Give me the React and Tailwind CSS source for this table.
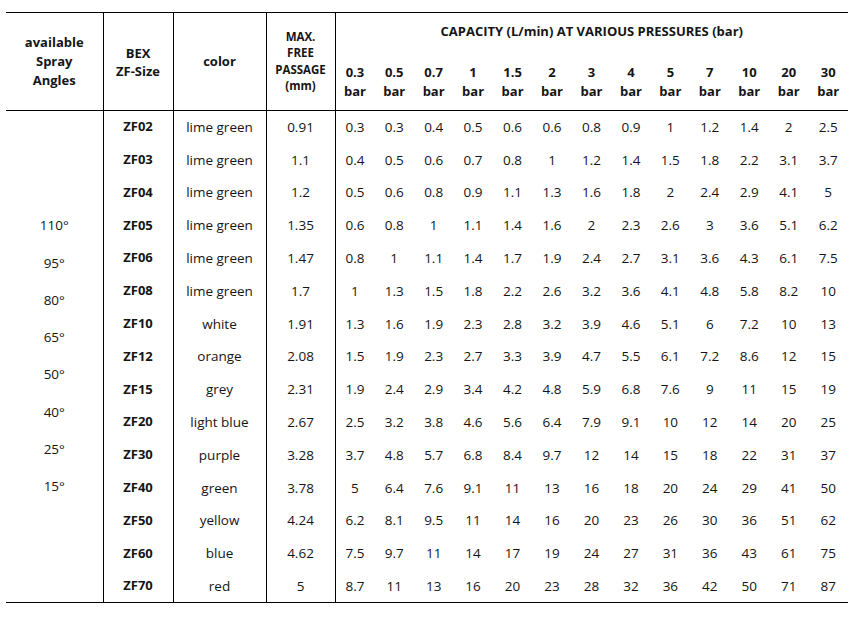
const pressures = ["0.3", "0.5", "0.7", "1", "1.5", "2", "3", "4", "5", "7", "10", "20", "30"]

const angles = ["110°", "95°", "80°", "65°", "50°", "40°", "25°", "15°"]

const rows = [
  ["ZF02", "lime green", "0.91", ["0.3", "0.3", "0.4", "0.5", "0.6", "0.6", "0.8", "0.9", "1", "1.2", "1.4", "2", "2.5"]],
  ["ZF03", "lime green", "1.1", ["0.4", "0.5", "0.6", "0.7", "0.8", "1", "1.2", "1.4", "1.5", "1.8", "2.2", "3.1", "3.7"]],
  ["ZF04", "lime green", "1.2", ["0.5", "0.6", "0.8", "0.9", "1.1", "1.3", "1.6", "1.8", "2", "2.4", "2.9", "4.1", "5"]],
  ["ZF05", "lime green", "1.35", ["0.6", "0.8", "1", "1.1", "1.4", "1.6", "2", "2.3", "2.6", "3", "3.6", "5.1", "6.2"]],
  ["ZF06", "lime green", "1.47", ["0.8", "1", "1.1", "1.4", "1.7", "1.9", "2.4", "2.7", "3.1", "3.6", "4.3", "6.1", "7.5"]],
  ["ZF08", "lime green", "1.7", ["1", "1.3", "1.5", "1.8", "2.2", "2.6", "3.2", "3.6", "4.1", "4.8", "5.8", "8.2", "10"]],
  ["ZF10", "white", "1.91", ["1.3", "1.6", "1.9", "2.3", "2.8", "3.2", "3.9", "4.6", "5.1", "6", "7.2", "10", "13"]],
  ["ZF12", "orange", "2.08", ["1.5", "1.9", "2.3", "2.7", "3.3", "3.9", "4.7", "5.5", "6.1", "7.2", "8.6", "12", "15"]],
  ["ZF15", "grey", "2.31", ["1.9", "2.4", "2.9", "3.4", "4.2", "4.8", "5.9", "6.8", "7.6", "9", "11", "15", "19"]],
  ["ZF20", "light blue", "2.67", ["2.5", "3.2", "3.8", "4.6", "5.6", "6.4", "7.9", "9.1", "10", "12", "14", "20", "25"]],
  ["ZF30", "purple", "3.28", ["3.7", "4.8", "5.7", "6.8", "8.4", "9.7", "12", "14", "15", "18", "22", "31", "37"]],
  ["ZF40", "green", "3.78", ["5", "6.4", "7.6", "9.1", "11", "13", "16", "18", "20", "24", "29", "41", "50"]],
  ["ZF50", "yellow", "4.24", ["6.2", "8.1", "9.5", "11", "14", "16", "20", "23", "26", "30", "36", "51", "62"]],
  ["ZF60", "blue", "4.62", ["7.5", "9.7", "11", "14", "17", "19", "24", "27", "31", "36", "43", "61", "75"]],
  ["ZF70", "red", "5", ["8.7", "11", "13", "16", "20", "23", "28", "32", "36", "42", "50", "71", "87"]],
]

export default function App() {
  return (
    <div className="bg-white w-[864px] h-[619px] pt-3 pl-1.5 text-[#151515] font-['Open_Sans',sans-serif]">
      <table className="table-fixed border-collapse w-[842px] text-center border-t border-b border-black">
        <colgroup>
          <col className="w-[97px]" />
          <col className="w-[70px]" />
          <col className="w-[93px]" />
          <col className="w-[69px]" />
          {pressures.map((p) => (
            <col key={p} className="w-[39.46px]" />
          ))}
        </colgroup>
        <thead>
          <tr className="h-[38px]">
            <th rowSpan={2} className="border-r border-black font-bold text-[13px] leading-[19px] align-middle">
              available
              <br />
              Spray
              <br />
              Angles
            </th>
            <th rowSpan={2} className="border-r border-black font-bold text-[13px] leading-[18px] align-middle">
              BEX
              <br />
              ZF-Size
            </th>
            <th rowSpan={2} className="border-r border-black font-bold text-[13px] align-middle">
              color
            </th>
            <th rowSpan={2} className="border-r border-black font-bold text-[11.5px] leading-[16.3px] align-middle">
              MAX.
              <br />
              FREE
              <br />
              PASSAGE
              <br />
              (mm)
            </th>
            <th colSpan={13} className="font-bold text-[13px] align-middle">
              CAPACITY (L/min) AT VARIOUS PRESSURES (bar)
            </th>
          </tr>
          <tr className="h-[60px] border-b border-black">
            {pressures.map((p) => (
              <th key={p} className="font-bold text-[13px] leading-[19px] align-middle pt-1">
                {p}
                <br />
                bar
              </th>
            ))}
          </tr>
        </thead>
        <tbody className="text-[13.5px]">
          {rows.map(([size, color, passage, values], i) => (
            <tr key={size} className="h-[32.8px]">
              {i === 0 && (
                <td rowSpan={rows.length} className="border-r border-black align-middle">
                  <div className="flex flex-col items-center">
                    {angles.map((a) => (
                      <div key={a} className="h-[37.3px] leading-[37.3px]">
                        {a}
                      </div>
                    ))}
                  </div>
                </td>
              )}
              <td className="border-r border-black font-bold text-[13px]">{size}</td>
              <td className="border-r border-black">{color}</td>
              <td className="border-r border-black">{passage}</td>
              {values.map((v, j) => (
                <td key={j}>{v}</td>
              ))}
            </tr>
          ))}
        </tbody>
      </table>
    </div>
  )
}
